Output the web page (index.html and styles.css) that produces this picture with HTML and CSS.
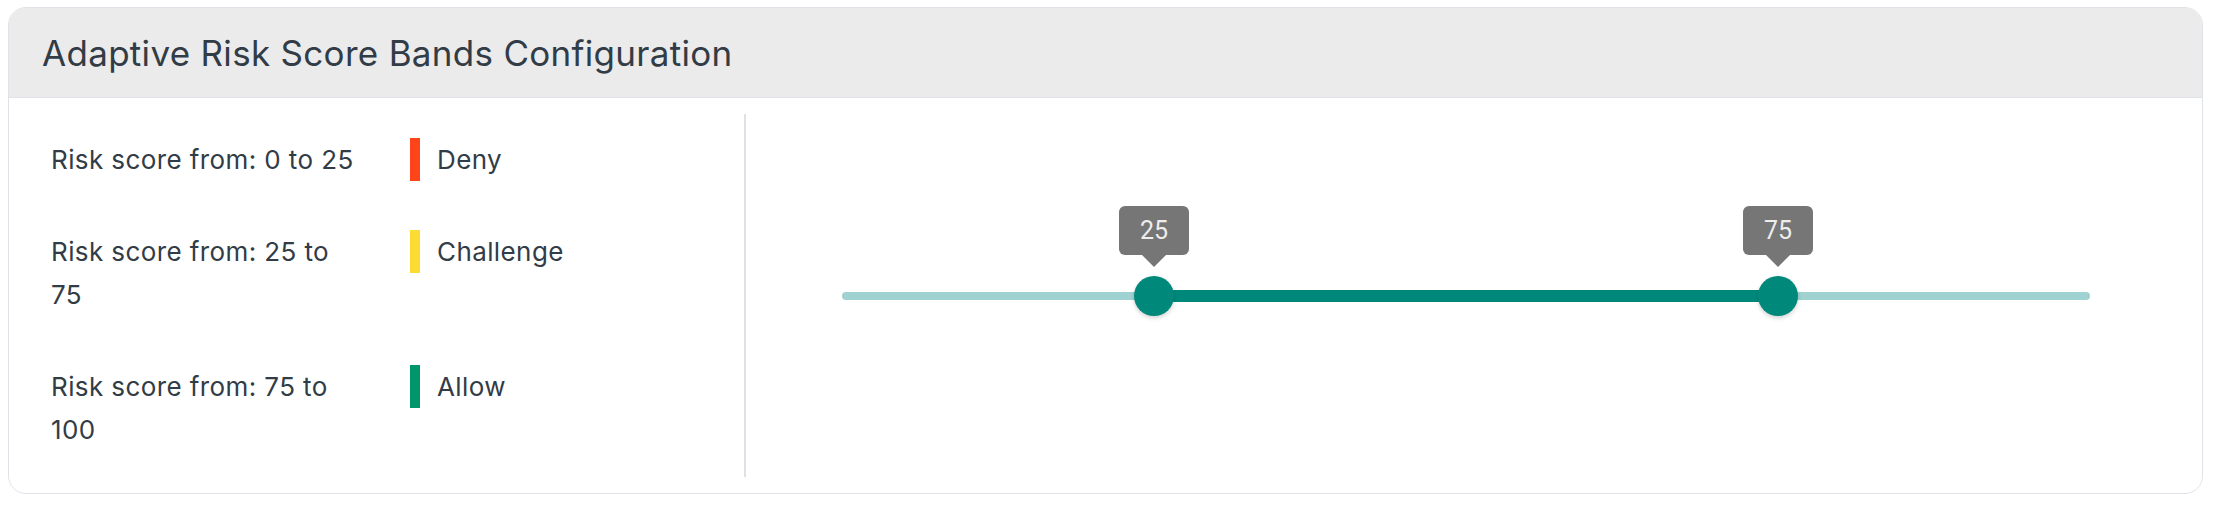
FILE: index.html
```html
<!DOCTYPE html>
<html lang="en">
<head>
    <meta charset="UTF-8">
    <meta name="viewport" content="width=device-width, initial-scale=1.0">
    <title>Adaptive Risk Score Bands</title>
    <link rel="stylesheet" href="styles.css">
</head>
<body>

    <div class="card">
        <div class="card-header">
            <h2 class="card-title">Adaptive Risk Score Bands Configuration</h2>
        </div>
        <div class="card-body">
            <div class="bands">
                <div class="band">
                    <span class="band-range">Risk score from: 0 to 25</span>
                    <span class="band-action deny">Deny</span>
                </div>
                <div class="band">
                    <span class="band-range">Risk score from: 25 to 75</span>
                    <span class="band-action challenge">Challenge</span>
                </div>
                <div class="band">
                    <span class="band-range">Risk score from: 75 to 100</span>
                    <span class="band-action allow">Allow</span>
                </div>
            </div>
            <div class="slider-col">
                <div class="range-slider">
                    <div class="track"></div>
                    <div class="track-fill" style="left: 25%; width: 50%;"></div>
                    <div class="thumb" style="left: 25%;"><span class="thumb-label">25</span></div>
                    <div class="thumb" style="left: 75%;"><span class="thumb-label">75</span></div>
                </div>
            </div>
        </div>
    </div>

</body>
</html>
```

FILE: styles.css
```css
* {
    box-sizing: border-box;
}
body {
    margin: 7px 15px 0 8px;
    font-family: Inter, "Open Sans", sans-serif;
    color: #323c46;
    background: #fff;
}
.card {
    border: 1px solid #dfe3e8;
    border-radius: 18px;
    overflow: hidden;
    background: #fff;
}
.card-header {
    height: 90px;
    display: flex;
    align-items: center;
    padding: 0 33px;
    background: #ebebeb;
    border-bottom: 1px solid #dfe3e8;
}
.card-title {
    margin: 0;
    font-size: 35px;
    font-weight: 400;
    letter-spacing: 0.3px;
}
.card-body {
    display: grid;
    grid-template-columns: 737px 1fr;
    padding: 16px 0;
}

/* band list on the left */
.bands {
    display: flex;
    flex-direction: column;
    gap: 49px;
    padding: 24px 0 26px 42px;
    border-right: 2px solid #dee2e6;
}
.band {
    display: flex;
    align-items: flex-start;
    font-size: 26px;
    line-height: 43px;
    letter-spacing: 0.4px;
}
.band-range {
    width: 312px;
    margin-right: 47px;
}
.band-action {
    padding-left: 17px;
    border-left: 10px solid;
}
.deny {
    border-color: #ff4419;
}
.challenge {
    border-color: #fbdc35;
}
.allow {
    border-color: #00956a;
}

/* two-handle slider */
.slider-col {
    padding: 178px 112px 0 96px;
}
.range-slider {
    position: relative;
    height: 8px;
}
.track {
    height: 8px;
    border-radius: 4px;
    background: #9fd2d1;
}
.track-fill {
    position: absolute;
    top: -2px;
    height: 12px;
    background: #00897b;
}
.thumb {
    position: absolute;
    top: 4px;
    width: 40px;
    height: 40px;
    margin: -20px 0 0 -20px;
    border-radius: 50%;
    background: #00897b;
    box-shadow: 0 2px 4px rgba(0, 0, 0, 0.18);
}
.thumb-label {
    position: absolute;
    left: 50%;
    bottom: 61px;
    width: 70px;
    height: 49px;
    margin-left: -35px;
    border-radius: 6px;
    background: #767676;
    color: #ededed;
    font-family: Roboto, "Liberation Sans", sans-serif;
    font-size: 25px;
    line-height: 49px;
    text-align: center;
}
.thumb-label::after {
    content: "";
    position: absolute;
    top: 100%;
    left: 50%;
    margin-left: -12px;
    border: 12px solid transparent;
    border-top-color: #767676;
    border-bottom: 0;
}
```
